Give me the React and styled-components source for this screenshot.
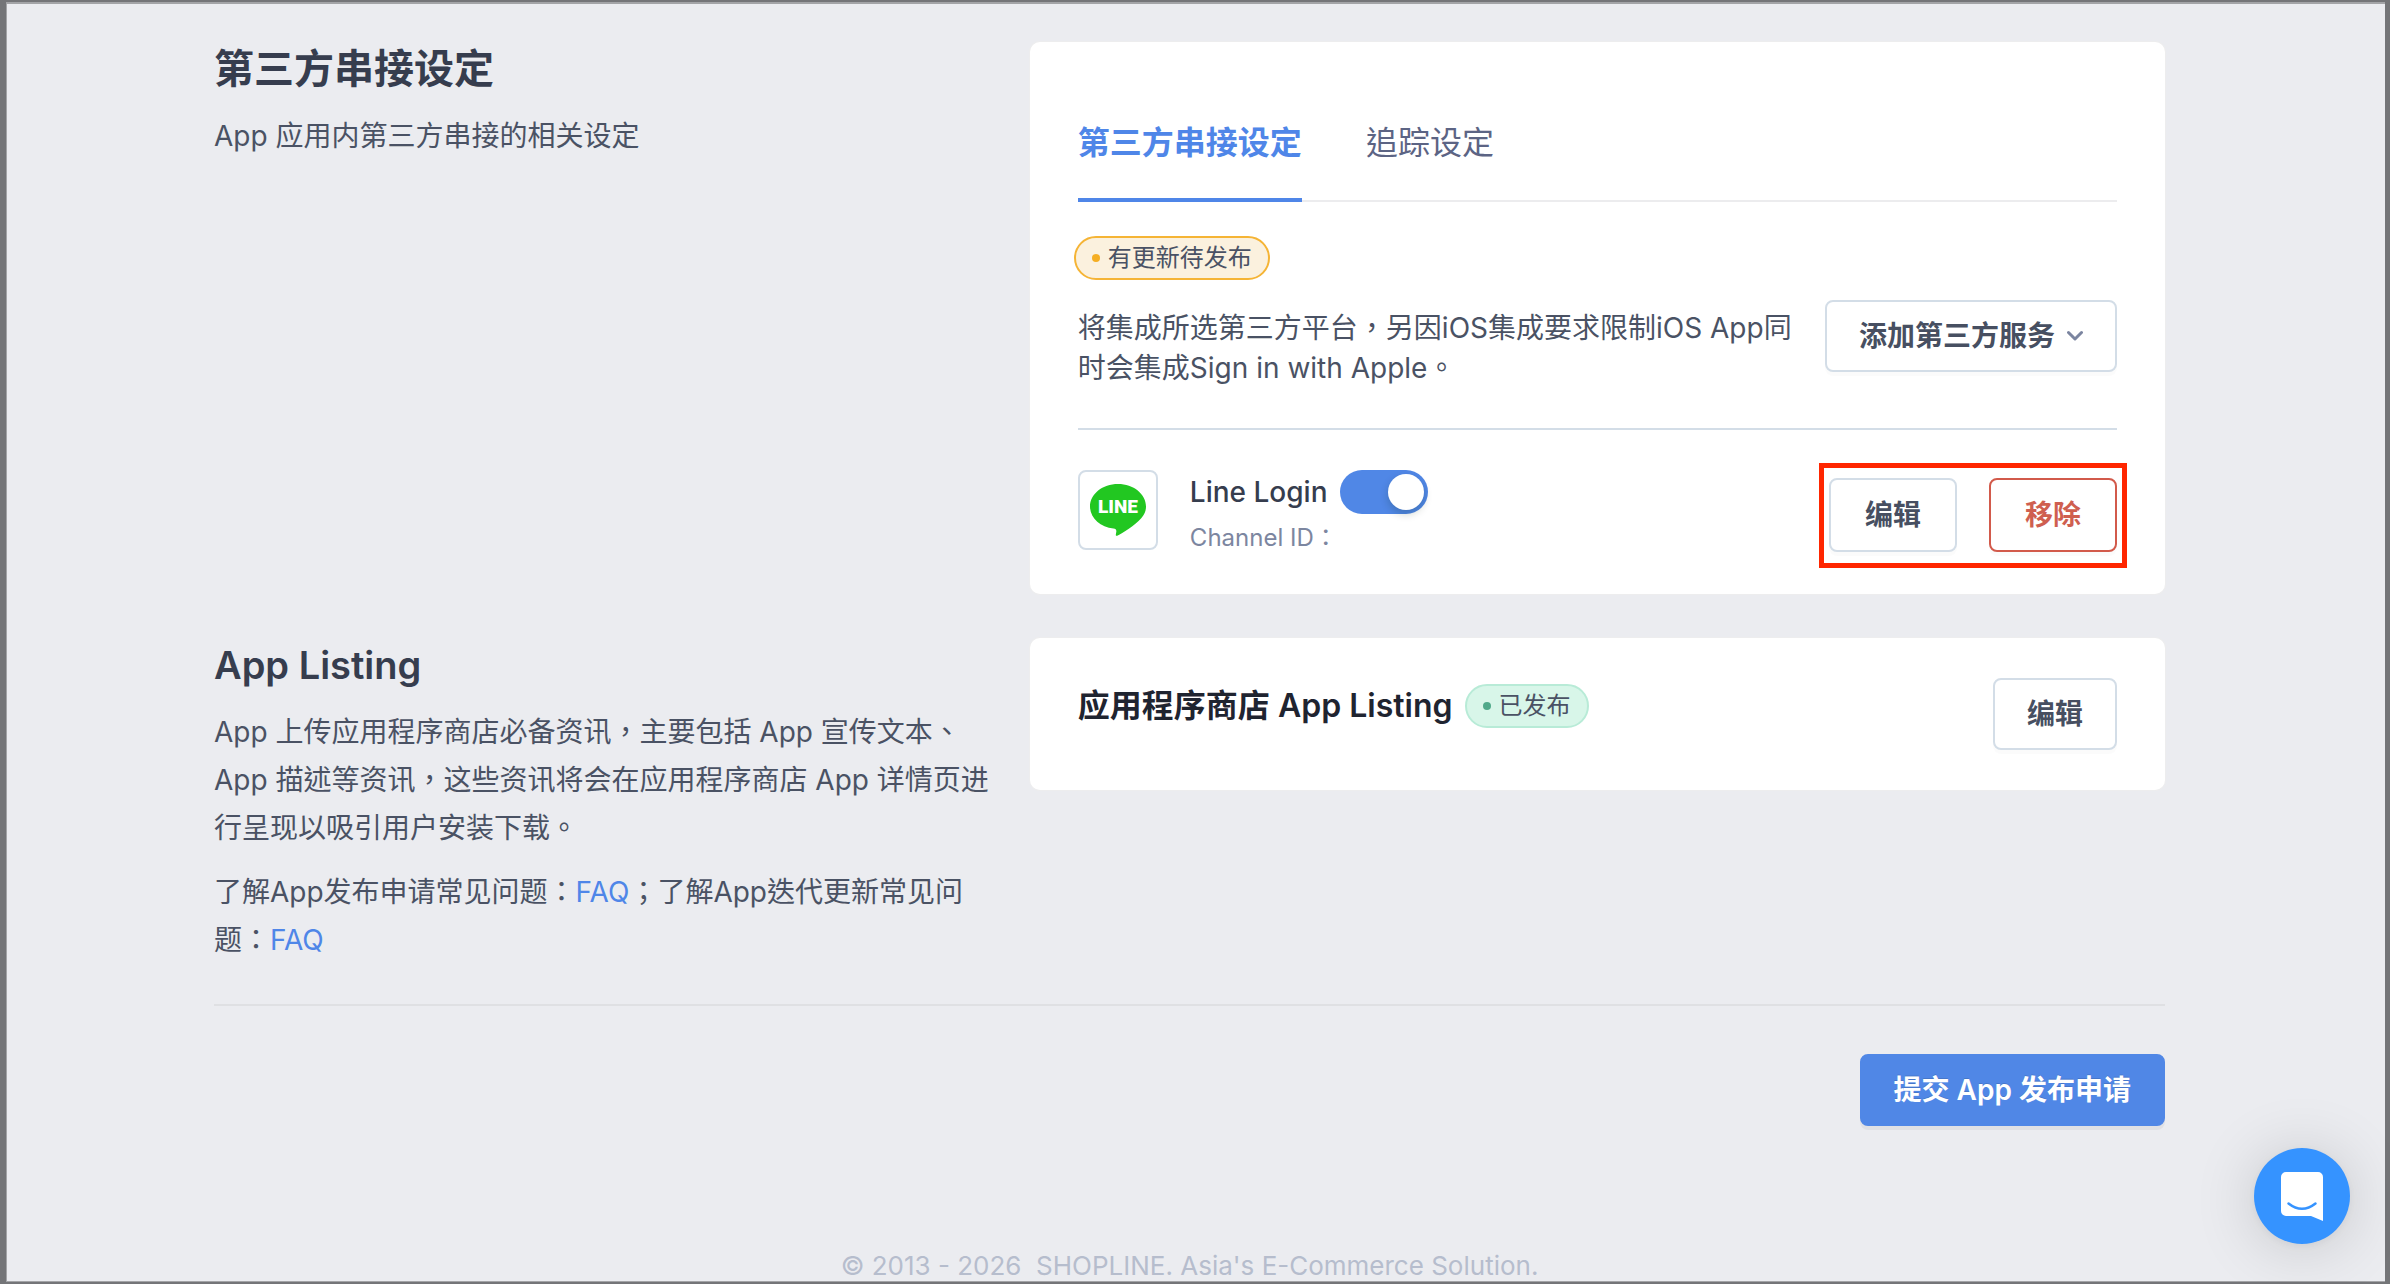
import React, { useState } from "react";
import styled, { createGlobalStyle, css } from "styled-components";

const GlobalStyle = createGlobalStyle`
  *, *::before, *::after { box-sizing: border-box; }
  body {
    margin: 0;
    background: #ebecf0;
    font-family: Inter, "Noto Sans CJK TC", sans-serif;
    font-size: 28px;
    line-height: 40px;
    color: #4a5264;
  }
  h1, h2, h3, p { margin: 0; }
  button { font-family: inherit; cursor: pointer; }
`;

const Page = styled.div`
  min-height: 100vh;
  background: #ebecf0;
  border-style: solid;
  border-color: #747578;
  border-width: 2px 5px 2px 6px;
  box-shadow: inset 0 2px 0 #a3a4a7, inset 1px 0 0 #a3a4a7, inset 0 -1px 0 #a3a4a7;
  padding: 40px 220px 1px 208px;
`;

const Section = styled.section`
  display: grid;
  grid-template-columns: 23fr 32fr;
  align-items: start;
  margin-bottom: ${(p) => (p.$last ? "40px" : "44px")};
`;

const Intro = styled.div`
  display: flex;
  flex-direction: column;
  gap: 16px;
  padding-right: 32px;
`;

const SectionTitle = styled.h2`
  font-size: ${(p) => (p.$latin ? "38px" : "40px")};
  line-height: 54px;
  font-weight: 600;
  color: #363d4e;
`;

const IntroText = styled.p`
  line-height: 48px;
`;

const TextLink = styled.a`
  color: #4f86e8;
  text-decoration: none;
`;

const Card = styled.div`
  background: #fff;
  border-radius: 10px;
  box-shadow: 0 0 0 1px #ededee;
  padding: 40px 48px;
`;

const Tabs = styled.div`
  display: flex;
  gap: 64px;
  box-shadow: inset 0 -2px 0 #ececee;
`;

const Tab = styled.button`
  height: 120px;
  padding: 0;
  background: none;
  border: 0;
  border-bottom: 4px solid ${(p) => (p.$active ? "#4f86e8" : "transparent")};
  font-size: 32px;
  font-weight: ${(p) => (p.$active ? 700 : 400)};
  color: ${(p) => (p.$active ? "#4f86e8" : "#5c6484")};
`;

const badgeTones = {
  warning: css`
    background: #fbf1de;
    border-color: #f5b435;
    --dot: #f5ae22;
  `,
  success: css`
    background: #d8f6e9;
    border-color: #b8ebd7;
    --dot: #50a98a;
  `,
};

const Badge = styled.span`
  display: inline-flex;
  align-items: center;
  gap: 8px;
  height: 44px;
  padding: 0 16px;
  border: 2px solid;
  border-radius: 22px;
  font-size: 24px;
  line-height: 32px;
  ${(p) => badgeTones[p.$tone]}

  &::before {
    content: "";
    width: 8px;
    height: 8px;
    border-radius: 50%;
    background: var(--dot);
  }
`;

const StatusLine = styled.div`
  display: flex;
  margin: 34px 0 20px -4px;
`;

const ServiceHeader = styled.div`
  display: flex;
  align-items: flex-start;
  justify-content: space-between;
  gap: 24px;
  padding-bottom: 40px;
  border-bottom: 2px solid #d3dde7;
`;

const ServiceText = styled.p`
  flex: 1;
  padding-top: 8px;
`;

const Button = styled.button`
  display: inline-flex;
  align-items: center;
  justify-content: center;
  gap: 12px;
  flex: none;
  height: ${(p) => (p.$large ? "74px" : "72px")};
  padding: 0 ${(p) => (p.$large ? "34px" : "32px")};
  background: #fff;
  border: 2px solid #d3dde7;
  border-radius: 8px;
  box-shadow: 0 4px 0 rgba(0, 0, 0, 0.015);
  font-size: 28px;
  line-height: 40px;
  font-weight: 600;
  color: #474f61;

  ${(p) =>
    p.$tone === "danger" &&
    css`
      border-color: #d25a4b;
      color: #cf5f50;
    `}

  ${(p) =>
    p.$tone === "primary" &&
    css`
      background: #5087e6;
      border-color: #5087e6;
      color: #fff;
      text-shadow: 0 -1px 0 rgba(0, 0, 0, 0.12);
      box-shadow: 0 4px 0 rgba(0, 0, 0, 0.045);
    `}
`;

const ServiceRow = styled.div`
  display: flex;
  align-items: flex-start;
  gap: 32px;
  padding-top: 40px;
`;

const LogoBox = styled.div`
  display: grid;
  place-items: center;
  width: 80px;
  height: 80px;
  border: 2px solid #d3dde7;
  border-radius: 8px;
`;

const ServiceInfo = styled.div`
  flex: 1;
  display: flex;
  flex-direction: column;
  gap: 8px;
`;

const ServiceName = styled.div`
  display: flex;
  align-items: center;
  gap: 12px;
  height: 44px;
  font-weight: 500;
  color: #363d4e;
`;

const Meta = styled.span`
  font-size: 24px;
  line-height: 32px;
  color: #7c86a0;
`;

const Switch = styled.input`
  appearance: none;
  width: 88px;
  height: 44px;
  margin: 0;
  padding: 4px;
  border-radius: 22px;
  background: ${(p) => (p.checked ? "#5087e6" : "#c4cad6")};
  display: flex;
  justify-content: ${(p) => (p.checked ? "flex-end" : "flex-start")};
  cursor: pointer;

  &::before {
    content: "";
    width: 36px;
    height: 36px;
    border-radius: 50%;
    background: #fff;
    box-shadow: 0 4px 8px rgba(0, 35, 11, 0.2);
  }
`;

const Actions = styled.div`
  position: relative;
  display: flex;
  gap: 32px;
  margin-top: 8px;

  &::after {
    content: "";
    position: absolute;
    inset: -15px -10px -16px;
    border: 5px solid #ff2600;
    pointer-events: none;
  }
`;

const ListingRow = styled.div`
  display: flex;
  align-items: flex-start;
  justify-content: space-between;
`;

const ListingTitle = styled.div`
  display: flex;
  align-items: center;
  gap: 12px;
  padding-top: 6px;
`;

const CardTitle = styled.h3`
  font-size: 32px;
  line-height: 44px;
  font-weight: 600;
  color: #1f2430;
`;

const SubmitBar = styled.div`
  display: flex;
  justify-content: flex-end;
  padding-top: 48px;
  border-top: 2px solid #dfe0e3;
`;

const Footer = styled.footer`
  margin-top: 127px;
  font-size: 26px;
  line-height: 26px;
  text-align: center;
  color: #b6bdcd;
`;

const ChatButton = styled.button`
  position: fixed;
  right: 40px;
  bottom: 40px;
  width: 96px;
  height: 96px;
  display: grid;
  place-items: center;
  padding: 0;
  border: 0;
  border-radius: 50%;
  background: #3593ff;
  box-shadow: 0 2px 12px rgba(0, 0, 0, 0.06), 0 4px 64px rgba(0, 0, 0, 0.16);
`;

function Chevron() {
  return (
    <svg width="16" height="12" viewBox="1 0 16 12" aria-hidden="true">
      <path d="M2.500 2.500l6.500 6.500 6.500-6.500" fill="none" stroke="#7b85a0" strokeWidth="3" strokeLinecap="round" strokeLinejoin="round" />
    </svg>
  );
}

function LineLogo() {
  return (
    <svg width="56" height="52" viewBox="0 0 56 52" role="img" aria-label="LINE">
      <path
        d="M28 0C12.500 0 0 10 0 22.500c0 11.200 10 20.500 23.500 22.100 2.200.4 3.100 1.300 2.800 3.200l-.5 3c-.1.900.5 1.300 1.400.9C31.500 49.700 45 41.500 51.200 34.200 54.500 30.600 56 26.900 56 22.500 56 10 43.500 0 28 0Z"
        fill="#22c721"
      />
      <text x="28" y="29" textAnchor="middle" fontFamily="Roboto, sans-serif" fontSize="19" fontWeight="900" fill="#fff">
        LINE
      </text>
    </svg>
  );
}

function ChatIcon() {
  return (
    <svg width="42" height="49" viewBox="0 0 42 49" aria-hidden="true">
      <path d="M5 0h32a5 5 0 0 1 5 5v44l-12-5H5a5 5 0 0 1-5-5V5a5 5 0 0 1 5-5Z" fill="#fff" />
      <path d="M7.500 31.500Q21 42 34.500 31.500" fill="none" stroke="#3593ff" strokeWidth="2.500" strokeLinecap="round" />
    </svg>
  );
}

export default function App() {
  const [enabled, setEnabled] = useState(true);
  const [tab, setTab] = useState(0);

  return (
    <>
      <GlobalStyle />
      <Page>
        <main>
          <Section>
            <Intro>
              <SectionTitle>第三方串接设定</SectionTitle>
              <IntroText>App 应用内第三方串接的相关设定</IntroText>
            </Intro>
            <Card>
              <Tabs role="tablist">
                {["第三方串接设定", "追踪设定"].map((label, i) => (
                  <Tab key={label} role="tab" aria-selected={tab === i} $active={tab === i} onClick={() => setTab(i)}>
                    {label}
                  </Tab>
                ))}
              </Tabs>
              <StatusLine>
                <Badge $tone="warning">有更新待发布</Badge>
              </StatusLine>
              <ServiceHeader>
                <ServiceText>
                  将集成所选第三方平台，另因iOS集成要求限制iOS App同时会集成Sign in with Apple。
                </ServiceText>
                <Button aria-haspopup="menu">
                  添加第三方服务
                  <Chevron />
                </Button>
              </ServiceHeader>
              <ServiceRow>
                <LogoBox>
                  <LineLogo />
                </LogoBox>
                <ServiceInfo>
                  <ServiceName>
                    <label htmlFor="line-login">Line Login</label>
                    <Switch
                      id="line-login"
                      type="checkbox"
                      role="switch"
                      checked={enabled}
                      onChange={(e) => setEnabled(e.target.checked)}
                    />
                  </ServiceName>
                  <Meta>Channel ID：</Meta>
                </ServiceInfo>
                <Actions>
                  <Button $large>编辑</Button>
                  <Button $large $tone="danger">移除</Button>
                </Actions>
              </ServiceRow>
            </Card>
          </Section>

          <Section $last>
            <Intro>
              <SectionTitle $latin>App Listing</SectionTitle>
              <IntroText>
                App 上传应用程序商店必备资讯，主要包括 App 宣传文本、App 描述等资讯，这些资讯将会在应用程序商店 App
                详情页进行呈现以吸引用户安装下载。
              </IntroText>
              <IntroText>
                了解App发布申请常见问题：<TextLink href="#publish-faq">FAQ</TextLink>；了解App迭代更新常见问题：
                <TextLink href="#update-faq">FAQ</TextLink>
              </IntroText>
            </Intro>
            <Card>
              <ListingRow>
                <ListingTitle>
                  <CardTitle>应用程序商店 App Listing</CardTitle>
                  <Badge $tone="success">已发布</Badge>
                </ListingTitle>
                <Button>编辑</Button>
              </ListingRow>
            </Card>
          </Section>

          <SubmitBar>
            <Button $tone="primary">提交 App 发布申请</Button>
          </SubmitBar>
        </main>
        <Footer>© 2013 - 2026&nbsp; SHOPLINE. Asia's E-Commerce Solution.</Footer>
        <ChatButton aria-label="Chat">
          <ChatIcon />
        </ChatButton>
      </Page>
    </>
  );
}
